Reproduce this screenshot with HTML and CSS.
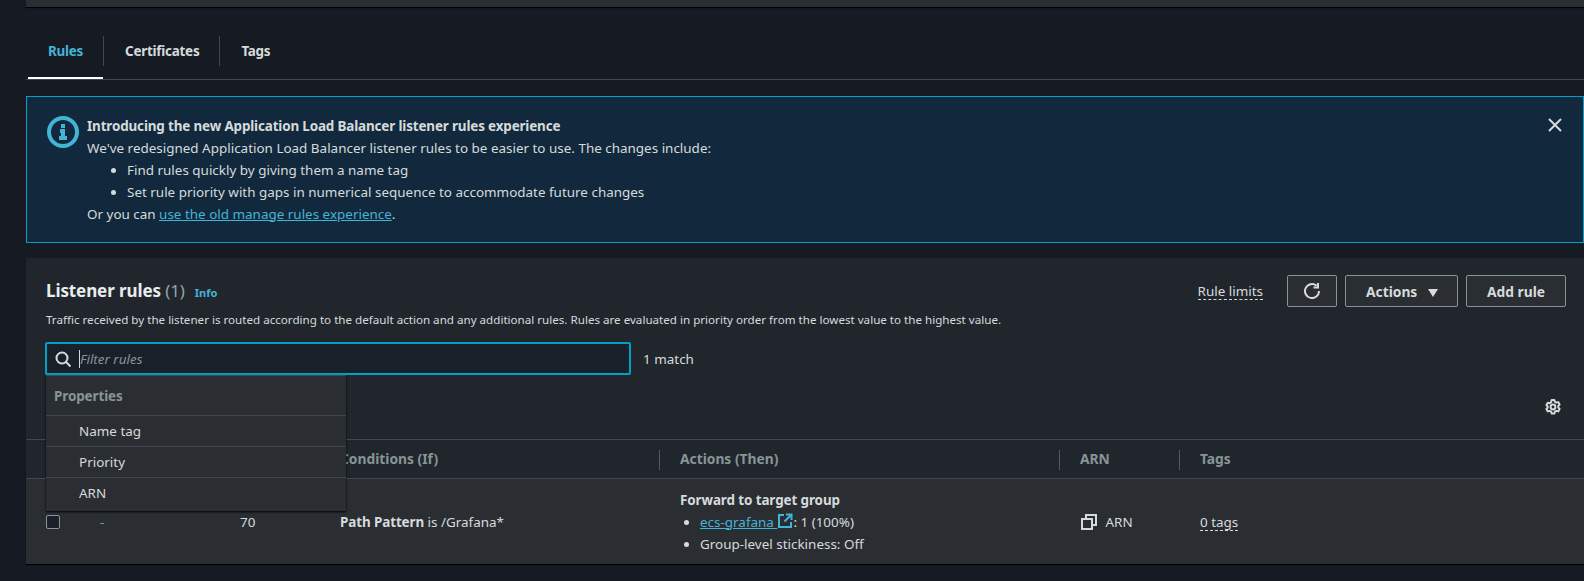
FILE: index.html
```html
<!DOCTYPE html>
<html>
<head>
	<title>Listener rules</title>
	<meta charset="utf-8">
	<link rel="stylesheet" href="styles.css">
</head>
<body>
	<div class="top-card"></div>

	<div class="tabs">
		<a class="tab tab-active">Rules</a>
		<a class="tab">Certificates</a>
		<a class="tab">Tags</a>
	</div>

	<div class="flash">
		<svg class="flash-icon" viewBox="0 0 32 32">
			<circle cx="16" cy="16" r="14" fill="none" stroke="#42b4d6" stroke-width="4"/>
			<rect x="14" y="8" width="4" height="4" fill="#42b4d6"/>
			<path d="M13 13h5v7h2v4h-8v-4h2v-3h-1z" fill="#42b4d6"/>
		</svg>
		<div class="flash-body">
			<div class="flash-title">Introducing the new Application Load Balancer listener rules experience</div>
			<div class="line">We've redesigned Application Load Balancer listener rules to be easier to use. The changes include:</div>
			<ul class="flash-list">
				<li>Find rules quickly by giving them a name tag</li>
				<li>Set rule priority with gaps in numerical sequence to accommodate future changes</li>
			</ul>
			<div class="line">Or you can <a class="link">use the old manage rules experience</a>.</div>
		</div>
		<svg class="flash-close" viewBox="0 0 16 16">
			<path d="M2 2l12 12M14 2L2 14" fill="none" stroke="#d5dbdb" stroke-width="2"/>
		</svg>
	</div>

	<div class="card">
		<div class="card-head">
			<div class="head-main">
				<div class="head-title">
					<h2>Listener rules <span class="count">(1)</span></h2>
					<a class="info">Info</a>
				</div>
				<div class="head-actions">
					<span class="limits">Rule limits</span>
					<button class="btn btn-icon">
						<svg width="16" height="16" viewBox="0 0 16 16">
							<path d="M15 8a7 7 0 1 1-2.4-5.2" fill="none" stroke="#d5dbdb" stroke-width="2"/>
							<path d="M14 0v4.5H9.5" fill="none" stroke="#d5dbdb" stroke-width="2"/>
						</svg>
					</button>
					<button class="btn btn-actions">Actions <span class="caret"></span></button>
					<button class="btn btn-add">Add rule</button>
				</div>
			</div>
			<p class="head-desc">Traffic received by the listener is routed according to the default action and any additional rules. Rules are evaluated in priority order from the lowest value to the highest value.</p>
			<div class="filter-row">
				<div class="filter">
					<svg class="filter-icon" width="16" height="16" viewBox="0 0 16 16">
						<circle cx="7" cy="7" r="5.5" fill="none" stroke="#d5dbdb" stroke-width="2"/>
						<path d="M11 11l4.5 4.5" fill="none" stroke="#d5dbdb" stroke-width="2"/>
					</svg>
					<span class="caret-line"></span>
					<span class="filter-text">Filter rules</span>
					<div class="menu">
						<div class="menu-head">Properties</div>
						<div class="menu-item">Name tag</div>
						<div class="menu-item">Priority</div>
						<div class="menu-item menu-last">ARN</div>
					</div>
				</div>
				<span class="matches">1 match</span>
			</div>
			<div class="prefs">
				<svg width="16" height="16" viewBox="0 0 16 16">
					<circle cx="8" cy="8" r="2.4" fill="none" stroke="#d5dbdb" stroke-width="2"/>
					<path d="M6.6 1h2.8l.5 1.8 1.5.8 1.8-.5 1.4 2.4-1.3 1.4v1.7l1.3 1.4-1.4 2.4-1.8-.5-1.5.8-.5 1.8H6.6l-.5-1.8-1.5-.8-1.8.5-1.4-2.4 1.3-1.4V7.5L1.4 6.1l1.4-2.4 1.8.5 1.5-.8z" fill="none" stroke="#d5dbdb" stroke-width="2" stroke-linejoin="round"/>
				</svg>
			</div>
		</div>

		<div class="thead">
			<div class="col-check"></div>
			<div class="col-name"></div>
			<div class="col-priority"></div>
			<div class="col-cond">Conditions (If)</div>
			<div class="col-act"><span class="th-sep"></span>Actions (Then)</div>
			<div class="col-arn"><span class="th-sep"></span>ARN</div>
			<div class="col-tags"><span class="th-sep"></span>Tags</div>
		</div>

		<div class="trow">
			<div class="col-check"><span class="checkbox"></span></div>
			<div class="col-name"><span class="dash">-</span></div>
			<div class="col-priority">70</div>
			<div class="col-cond"><b>Path Pattern</b> is /Grafana*</div>
			<div class="col-act cell-pad">
				<b>Forward to target group</b>
				<ul class="act-list">
					<li><a class="link">ecs-grafana <svg class="ext" width="16" height="16" viewBox="0 0 16 16"><path d="M7 2H2v12h12V9" fill="none" stroke="#42b4d6" stroke-width="2"/><path d="M9 1.5h5.5V7M14 2L7.5 8.5" fill="none" stroke="#42b4d6" stroke-width="2"/></svg></a>: 1 (100%)</li>
					<li>Group-level stickiness: Off</li>
				</ul>
			</div>
			<div class="col-arn cell-pad">
				<svg class="copy" width="16" height="16" viewBox="0 0 16 16">
					<rect x="1" y="5" width="10" height="10" fill="none" stroke="#d5dbdb" stroke-width="2"/>
					<path d="M5 4V1h10v10h-3" fill="none" stroke="#d5dbdb" stroke-width="2"/>
				</svg>
				ARN
			</div>
			<div class="col-tags cell-pad"><span class="limits">0 tags</span></div>
		</div>
	</div>
</body>
</html>
```

FILE: styles.css
```css
html {
	background-color: #161b23;
}

body {
	margin: 0;
	height: 581px;
	overflow: hidden;
	padding: 0 0 0 26px;
	font-family: "Noto Sans", sans-serif;
	font-size: 13.44px;
	line-height: 22px;
	color: #d5dbdb;
}

b {
	font-weight: 700;
	letter-spacing: -0.1px;
}

ul {
	margin: 0;
}

.link {
	color: #42b4d6;
	text-decoration: underline;
}

.top-card {
	height: 7px;
	background-color: #2a2e33;
	box-shadow: 0 1px 1px #000;
}

.tabs {
	display: flex;
	padding: 29px 0 13px 2px;
	border-bottom: 1px solid #414750;
}

.tab {
	position: relative;
	height: 30px;
	line-height: 30px;
	padding: 0 20px;
	font-weight: 700;
	letter-spacing: -0.25px;
	color: #d5dbdb;
	border-right: 1px solid #414750;
}

.tab + .tab {
	padding-left: 21px;
}

.tab:last-child {
	border-right: none;
}

.tab-active {
	color: #42b4d6;
}

.tab-active::after {
	content: "";
	position: absolute;
	left: 0;
	right: 0;
	bottom: -13px;
	height: 2px;
	background-color: #fff;
}

.flash {
	display: flex;
	margin-top: 16px;
	height: 147px;
	box-sizing: border-box;
	padding: 17.5px 20px 0 20px;
	background-color: #12293d;
	border: 1px solid #00a1c9;
}

.flash-icon {
	width: 32px;
	height: 32px;
	flex: none;
	margin: 1.5px 8px 0 0;
}

.flash-body {
	flex: 1;
}

.flash-title {
	font-weight: 700;
	letter-spacing: -0.15px;
}

.flash-list {
	padding-left: 40px;
}

.flash-close {
	width: 16px;
	height: 16px;
	flex: none;
	margin-top: 2.5px;
}

.card {
	margin-top: 15px;
	background-color: #21262d;
	box-shadow: 0 1px 1px #000;
}

.card-head {
	position: relative;
	padding: 17px 18px 0 20px;
	height: 181px;
	box-sizing: border-box;
}

.head-main {
	display: flex;
	justify-content: space-between;
	align-items: center;
}

.head-title {
	display: flex;
	align-items: center;
}

h2 {
	margin: 0;
	font-size: 17px;
	line-height: 32px;
	font-weight: 700;
	letter-spacing: -0.1px;
	color: #eaeded;
}

.count {
	font-weight: 400;
	color: #95a5a6;
}

.info {
	margin: 3px 0 0 10px;
	font-size: 11px;
	font-weight: 700;
	color: #42b4d6;
}

.head-actions {
	display: flex;
	align-items: center;
}

.limits {
	display: inline-block;
	border-bottom: 1px dashed #d5dbdb;
	line-height: 16px;
}

.btn {
	height: 32px;
	margin-left: 8px;
	background: #2a2e33;
	border: 1px solid #879596;
	border-radius: 2px;
	font: 700 13.8px "Noto Sans", sans-serif;
	color: #d5dbdb;
	padding: 0;
}

.btn-icon {
	width: 50px;
	margin-left: 24px;
	display: flex;
	align-items: center;
	justify-content: center;
}

.btn-actions {
	width: 113px;
	text-align: left;
	padding-left: 20px;
}

.btn-add {
	width: 100px;
}

.caret {
	display: inline-block;
	width: 0;
	height: 0;
	margin-left: 7px;
	border-left: 5.5px solid transparent;
	border-right: 5.5px solid transparent;
	border-top: 8px solid #d5dbdb;
}

.head-desc {
	margin: 4px 0 0;
	font-size: 11.62px;
	line-height: 18px;
}

.filter-row {
	display: flex;
	align-items: center;
	margin: 13px 0 0 -1px;
}

.filter {
	position: relative;
	display: flex;
	align-items: center;
	width: 586px;
	height: 33px;
	box-sizing: border-box;
	padding-left: 8px;
	background-color: #1a2029;
	border: 2px solid #00a1c9;
	border-radius: 2px;
}

.filter-icon {
	flex: none;
}

.caret-line {
	width: 1px;
	height: 18px;
	margin-left: 8px;
	background-color: #d5dbdb;
}

.filter-text {
	font-style: italic;
	color: #879596;
}

.menu {
	position: absolute;
	z-index: 2;
	left: -1px;
	top: 31px;
	width: 300px;
	background-color: #2a2e33;
	border-top: 1px solid #414750;
	box-shadow: 0 1px 2px #000;
}

.menu-head {
	padding: 0 8px;
	height: 39px;
	line-height: 41px;
	font-weight: 700;
	letter-spacing: -0.1px;
	color: #879596;
}

.menu-item {
	height: 31px;
	line-height: 31px;
	padding-left: 33px;
	border-top: 1px solid #414750;
	box-sizing: border-box;
}

.menu-last {
	height: 34px;
}

.matches {
	margin-left: 12px;
}

.prefs {
	position: absolute;
	right: 23px;
	top: 141px;
	line-height: 0;
}

.thead, .trow {
	display: flex;
	border-top: 1px solid #414750;
}

.thead {
	height: 39px;
	box-sizing: border-box;
	align-items: center;
	font-size: 13.8px;
	font-weight: 700;
	color: #879596;
}

.th-sep {
	display: inline-block;
	width: 1px;
	height: 20px;
	background-color: #545b64;
	margin-right: 20px;
	vertical-align: middle;
}

.trow {
	height: 86px;
	box-sizing: border-box;
	align-items: center;
	background-color: #2a2e33;
}

.col-check {
	width: 20px;
	margin-left: 20px;
	line-height: 0;
}

.col-name {
	width: 174px;
	padding-left: 34px;
	box-sizing: border-box;
}

.col-priority {
	width: 100px;
}

.col-cond {
	width: 319px;
}

.col-act {
	width: 400px;
	box-sizing: border-box;
}

.col-arn {
	width: 120px;
	box-sizing: border-box;
}

.cell-pad {
	padding-left: 21px;
}

.col-arn.cell-pad {
	padding-left: 22px;
}

.checkbox {
	display: inline-block;
	width: 12px;
	height: 12px;
	border: 1px solid #879596;
	border-radius: 2px;
	background-color: #1a2029;
}

.dash {
	color: #42b4d6;
}

.act-list {
	padding-left: 20px;
}

.ext {
	vertical-align: -2px;
}

.copy {
	vertical-align: -3px;
	margin-right: 5px;
}
```
